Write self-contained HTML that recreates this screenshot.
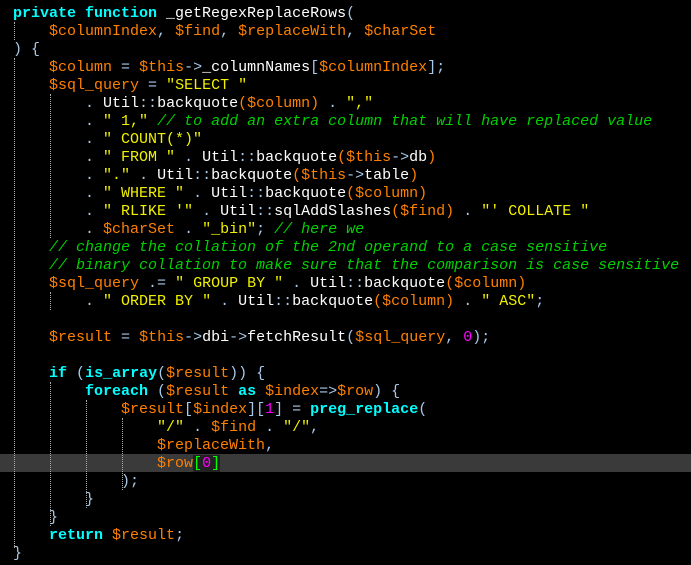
<!DOCTYPE html>
<html><head><meta charset="utf-8"><style>
html,body{margin:0;padding:0;background:#000;width:691px;height:565px;overflow:hidden}
pre{margin:0;position:absolute;left:13px;top:5px;font-family:"Liberation Mono",monospace;font-size:15px;line-height:18px;color:#fff;white-space:pre}
.k{color:#00ffff;font-weight:bold}.v{color:#ff8000}.s{color:#f0f000}.c{color:#00d000;font-style:italic}.o{color:#a8c8e8}.n{color:#ff00ff}.g{color:#00ff00;background:#222}
.hl{position:absolute;left:0;top:454px;width:691px;height:18px;background:#3a3a3a}
.gd{position:absolute;width:0;border-left:1px dotted #aaa}
.cur{position:absolute;left:219px;top:455px;width:1px;height:16px;background:#fff}
</style></head><body>
<div class="hl"></div>
<div class="gd" style="left:14px;top:22px;height:18px"></div>
<div class="gd" style="left:14px;top:58px;height:490px"></div>
<div class="gd" style="left:50px;top:94px;height:144px"></div>
<div class="gd" style="left:50px;top:292px;height:18px"></div>
<div class="gd" style="left:50px;top:382px;height:144px"></div>
<div class="gd" style="left:86px;top:400px;height:108px"></div>
<div class="gd" style="left:122px;top:418px;height:72px"></div>
<div class="cur"></div>
<pre><span class="k">private</span> <span class="k">function</span> _getRegexReplaceRows<span class="o">(</span>
    <span class="v">$columnIndex</span><span class="o">,</span> <span class="v">$find</span><span class="o">,</span> <span class="v">$replaceWith</span><span class="o">,</span> <span class="v">$charSet</span>
<span class="o">) {</span>
    <span class="v">$column</span> <span class="o">=</span> <span class="v">$this</span><span class="o">-&gt;</span>_columnNames<span class="o">[</span><span class="v">$columnIndex</span><span class="o">];</span>
    <span class="v">$sql_query</span> <span class="o">=</span> <span class="s">"SELECT "</span>
        <span class="o">.</span> Util<span class="o">::</span>backquote<span class="v">($column)</span> <span class="o">.</span> <span class="s">","</span>
        <span class="o">.</span> <span class="s">" 1,"</span> <span class="c">// to add an extra column that will have replaced value</span>
        <span class="o">.</span> <span class="s">" COUNT(*)"</span>
        <span class="o">.</span> <span class="s">" FROM "</span> <span class="o">.</span> Util<span class="o">::</span>backquote<span class="v">($this</span><span class="o">-&gt;</span>db<span class="v">)</span>
        <span class="o">.</span> <span class="s">"."</span> <span class="o">.</span> Util<span class="o">::</span>backquote<span class="v">($this</span><span class="o">-&gt;</span>table<span class="v">)</span>
        <span class="o">.</span> <span class="s">" WHERE "</span> <span class="o">.</span> Util<span class="o">::</span>backquote<span class="v">($column)</span>
        <span class="o">.</span> <span class="s">" RLIKE '"</span> <span class="o">.</span> Util<span class="o">::</span>sqlAddSlashes<span class="v">($find)</span> <span class="o">.</span> <span class="s">"' COLLATE "</span>
        <span class="o">.</span> <span class="v">$charSet</span> <span class="o">.</span> <span class="s">"_bin"</span><span class="o">;</span> <span class="c">// here we</span>
    <span class="c">// change the collation of the 2nd operand to a case sensitive</span>
    <span class="c">// binary collation to make sure that the comparison is case sensitive</span>
    <span class="v">$sql_query</span> <span class="o">.=</span> <span class="s">" GROUP BY "</span> <span class="o">.</span> Util<span class="o">::</span>backquote<span class="v">($column)</span>
        <span class="o">.</span> <span class="s">" ORDER BY "</span> <span class="o">.</span> Util<span class="o">::</span>backquote<span class="v">($column)</span> <span class="o">.</span> <span class="s">" ASC"</span><span class="o">;</span>

    <span class="v">$result</span> <span class="o">=</span> <span class="v">$this</span><span class="o">-&gt;</span>dbi<span class="o">-&gt;</span>fetchResult<span class="o">(</span><span class="v">$sql_query</span><span class="o">,</span> <span class="n">0</span><span class="o">);</span>

    <span class="k">if</span> <span class="o">(</span><span class="k">is_array</span><span class="o">(</span><span class="v">$result</span><span class="o">)) {</span>
        <span class="k">foreach</span> <span class="o">(</span><span class="v">$result</span> <span class="k">as</span> <span class="v">$index</span><span class="o">=&gt;</span><span class="v">$row</span><span class="o">) {</span>
            <span class="v">$result</span><span class="o">[</span><span class="v">$index</span><span class="o">][</span><span class="n">1</span><span class="o">]</span> <span class="o">=</span> <span class="k">preg_replace</span><span class="o">(</span>
                <span class="s">"/"</span> <span class="o">.</span> <span class="v">$find</span> <span class="o">.</span> <span class="s">"/"</span><span class="o">,</span>
                <span class="v">$replaceWith</span><span class="o">,</span>
                <span class="v">$row</span><span class="g">[</span><span class="n" style="background:#222">0</span><span class="g">]</span>
            <span class="o">);</span>
        <span class="o">}</span>
    <span class="o">}</span>
    <span class="k">return</span> <span class="v">$result</span><span class="o">;</span>
<span class="o">}</span></pre>
</body></html>
